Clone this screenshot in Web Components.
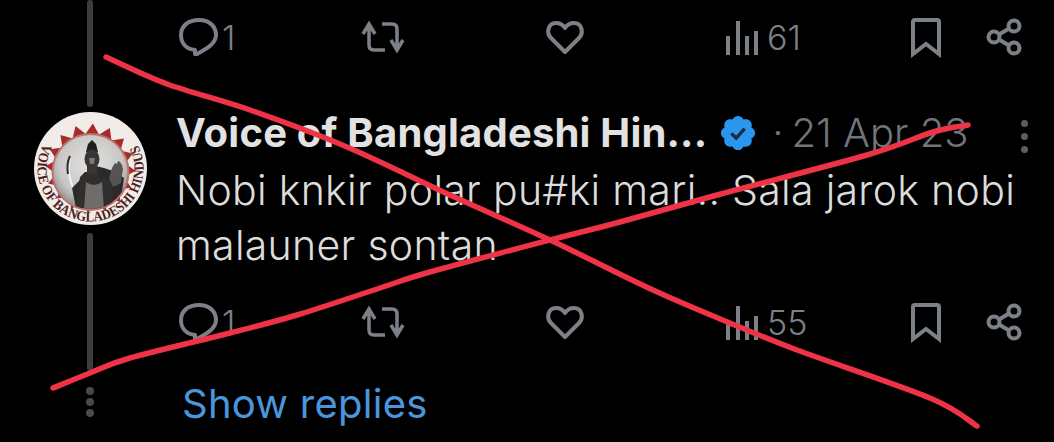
<!DOCTYPE html>
<html>
<head>
<meta charset="utf-8">
<style>
  html, body { margin: 0; background: #000; }
</style>
</head>
<body>
<thread-view>
  <thread-row>
    <rail-line slot="rail" style="height:107px"></rail-line>
    <tweet-actions style="margin-top:16px" replies="1" views="61"></tweet-actions>
  </thread-row>
  <thread-row>
    <seal-avatar slot="rail"></seal-avatar>
    <rail-line slot="rail" style="height:138px;margin-top:8px"></rail-line>
    <tweet-head name="Voice of Bangladeshi Hin..." date="21 Apr 23"></tweet-head>
    <tweet-text>Nobi knkir polar pu#ki mari.. Sala jarok nobi malauner sontan</tweet-text>
    <tweet-actions style="margin-top:28px" replies="1" views="55"></tweet-actions>
  </thread-row>
  <thread-row>
    <rail-dots slot="rail"></rail-dots>
    <show-replies>Show replies</show-replies>
  </thread-row>
  <red-cross></red-cross>
</thread-view>

<script>
  const FONT = '"Inter", "Liberation Sans", sans-serif';

  class ThreadView extends HTMLElement {
    constructor() {
      super();
      this.attachShadow({ mode: "open" });
      this.shadowRoot.innerHTML = `
        <style>
          :host {
            display: block;
            position: relative;
            width: 1054px;
            height: 442px;
            overflow: hidden;
            background: #000;
          }
        </style>
        <slot></slot>
      `;
    }
  }

  class ThreadRow extends HTMLElement {
    constructor() {
      super();
      this.attachShadow({ mode: "open" });
      this.shadowRoot.innerHTML = `
        <style>
          :host { display: grid; grid-template-columns: 176px 1fr; }
          .rail { display: flex; flex-direction: column; align-items: center; padding-left: 4px; }
          .body { display: flex; flex-direction: column; min-width: 0; }
        </style>
        <div class="rail"><slot name="rail"></slot></div>
        <div class="body"><slot></slot></div>
      `;
    }
  }

  class RailLine extends HTMLElement {
    constructor() {
      super();
      this.attachShadow({ mode: "open" });
      this.shadowRoot.innerHTML = `
        <style>
          :host { display: block; width: 6px; border-radius: 3px; background: #3b3c40; margin-bottom: 5px; }
        </style>
      `;
    }
  }

  class RailDots extends HTMLElement {
    constructor() {
      super();
      this.attachShadow({ mode: "open" });
      this.shadowRoot.innerHTML = `
        <style>
          :host { display: flex; flex-direction: column; gap: 3px; padding-top: 11px; }
          i { display: block; width: 8px; height: 8px; border-radius: 50%; background: #48494d; }
        </style>
        <i></i><i></i><i></i>
      `;
    }
  }

  class SealAvatar extends HTMLElement {
    constructor() {
      super();
      this.attachShadow({ mode: "open" });
      let rays = "";
      for (let i = 0; i < 16; i++) {
        rays += `<polygon points="-7,-34 7,-34 0,-45" transform="rotate(${i * 22.5 + 3})"/>`;
      }
      this.shadowRoot.innerHTML = `
        <style>
          :host { display: block; width: 113px; height: 113px; }
          svg { display: block; }
          text { font: bold 14px "Liberation Serif", serif; fill: #4d2220; }
        </style>
        <svg width="113" height="113" viewBox="0 0 113 113">
          <defs>
            <path id="ring" d="M9.7 31.6A53 53 0 1 0 103.3 31.6"/>
            <radialGradient id="photo" cx="50%" cy="40%" r="62%">
              <stop offset="0" stop-color="#e4e3e1"/>
              <stop offset=".7" stop-color="#c9c7c5"/>
              <stop offset="1" stop-color="#8a8886"/>
            </radialGradient>
            <clipPath id="photoclip"><circle cx="56.5" cy="60" r="37"/></clipPath>
          </defs>
          <circle cx="56.5" cy="56.5" r="56.5" fill="#f2ece8"/>
          <g transform="translate(56.5 56.5)" fill="#a62b2b">${rays}</g>
          <circle cx="56.5" cy="60" r="39" fill="#b9736c"/>
          <circle cx="56.5" cy="60" r="37" fill="url(#photo)"/>
          <g clip-path="url(#photoclip)">
            <path d="M36 46C32 60 38 78 50 96" fill="none" stroke="#f5f3f1" stroke-width="2"/>
            <path d="M36 44C33 50 33 56 34 62" fill="none" stroke="#2a2a2a" stroke-width="2"/>
            <path d="M48 66l-10 10 4 20h50l-4-16 2-14-8-6-12-4-8-2z" fill="#2a2a2a"/>
            <path d="M51 60h14l1 6 11 3 3 14-4 14H42l2-18 2-14z" fill="#302f2e"/>
            <path d="M52 70q8 6 16 0l2 28H50z" fill="#6f6d6b"/>
            <path d="M78 56l3-5 2 1 1-3 2 1 2 3 1 4-2 14-8 4-4-9z" fill="#565452"/>
            <path d="M52 40l2-8 4-4 4 4 2 8z" fill="#1f1f1f"/>
            <ellipse cx="58" cy="47" rx="7.5" ry="9.5" fill="#383634"/>
            <path d="M55 46h6l-1 6h-4z" fill="#7c7a78"/>
            <path d="M53 54h10v8h-10z" fill="#383634"/>
          </g>
          <text><textPath href="#ring" textLength="216" lengthAdjust="spacingAndGlyphs">VOICE OF BANGLADESHI HINDUS</textPath></text>
        </svg>
      `;
    }
  }

  class TweetHead extends HTMLElement {
    constructor() {
      super();
      this.attachShadow({ mode: "open" });
      const name = this.getAttribute("name");
      const date = this.getAttribute("date");
      this.shadowRoot.innerHTML = `
        <style>
          :host {
            display: flex;
            align-items: center;
            height: 41px;
            font-family: ${FONT};
            font-size: 40px;
            white-space: nowrap;
          }
          .name { font-weight: 700; color: #e2e2e2; letter-spacing: 0.2px; }
          svg { display: block; flex: none; margin-left: 11px; }
          .dot { color: #70747c; margin-left: 14px; font-weight: 300; }
          .date { color: #70747c; margin-left: 8px; font-weight: 300; }
          .more { display: flex; flex-direction: column; gap: 6px; margin: 7px 26px 0 auto; }
          .more i { display: block; width: 7px; height: 7px; border-radius: 50%; background: #5b5d62; }
        </style>
        <span class="name">${name}</span>
        <svg width="40" height="40" viewBox="0 0 24 24">
          <path fill="#2b96ee" d="M22.25 12c0-1.43-.88-2.67-2.19-3.34.46-1.39.2-2.9-.81-3.91s-2.52-1.27-3.91-.81c-.66-1.31-1.91-2.19-3.34-2.19s-2.67.88-3.33 2.19c-1.4-.46-2.91-.2-3.92.81s-1.26 2.52-.8 3.91c-1.31.67-2.2 1.91-2.2 3.34s.89 2.67 2.2 3.34c-.46 1.39-.21 2.9.8 3.91s2.52 1.26 3.91.81c.67 1.31 1.91 2.19 3.34 2.19s2.68-.88 3.34-2.19c1.39.45 2.9.2 3.91-.81s1.27-2.52.81-3.91c1.31-.67 2.19-1.91 2.19-3.34z"/>
          <path fill="none" stroke="#1b2a44" stroke-width="2" d="M8 12.2l2.9 2.8 5.1-5.6"/>
        </svg>
        <span class="dot">·</span>
        <span class="date">${date}</span>
        <span class="more"><i></i><i></i><i></i></span>
      `;
    }
  }

  class TweetText extends HTMLElement {
    constructor() {
      super();
      this.attachShadow({ mode: "open" });
      this.shadowRoot.innerHTML = `
        <style>
          :host {
            display: block;
            margin-top: 10px;
            width: 860px;
            font-family: ${FONT};
            font-size: 41px;
            font-weight: 300;
            letter-spacing: 0.3px;
            line-height: 55px;
            color: #dcdcdc;
          }
        </style>
        <slot></slot>
      `;
    }
  }

  const ICONS = {
    reply: `<svg width="42" height="40" viewBox="0 0 42 40" fill="none" stroke="#7c8087" stroke-width="4" stroke-linejoin="round">
      <path d="M17 33C8 32 3 26 3 18 3 9 10 3 21 3 32 3 38 10 38 18 38 26 30 31 19 37L17 37Z"/></svg>`,
    retweet: `<svg width="46" height="34" viewBox="0 0 46 34" fill="none" stroke="#7c8087" stroke-width="3.5">
      <path d="M3 14L9 4 15 14M9 5V25Q9 30 14 30H25"/>
      <path d="M22 4H32Q37 4 37 9V29M31 20L37 30 43 20"/></svg>`,
    heart: `<svg width="40" height="36" viewBox="0 0 40 36" fill="none" stroke="#7c8087" stroke-width="4" stroke-linejoin="round">
      <path d="M20 33L6 19C1 14 3 4 11 4 15 4 18 6 20 9 22 6 25 4 29 4 37 4 39 14 34 19Z"/></svg>`,
    views: `<svg width="34" height="38" viewBox="0 0 34 38" fill="#7c8087">
      <rect x="2" y="18" width="4" height="19"/><rect x="12" y="3" width="4" height="34"/>
      <rect x="21" y="18" width="4" height="19"/><rect x="30" y="13" width="4" height="24"/></svg>`,
    bookmark: `<svg width="36" height="42" viewBox="0 0 36 42" fill="none" stroke="#7c8087" stroke-width="4">
      <path d="M5 6Q5 4 7 4H29Q31 4 31 6V38L18 28 5 38Z"/></svg>`,
    share: `<svg width="40" height="40" viewBox="0 0 40 40" fill="none" stroke="#7c8087" stroke-width="4">
      <circle cx="9" cy="20" r="5.5"/><circle cx="29" cy="9" r="5.5"/><circle cx="29" cy="31" r="5.5"/>
      <path d="M14 17.5L24 11.5M14 22.5L24 28.5"/></svg>`
  };

  class TweetActions extends HTMLElement {
    constructor() {
      super();
      this.attachShadow({ mode: "open" });
      this.shadowRoot.innerHTML = `
        <style>
          :host {
            display: grid;
            grid-template-columns: 182px 185px 179px 184px 77px auto;
            align-items: center;
            height: 40px;
            padding-left: 2px;
            font-family: ${FONT};
            font-size: 34px;
            font-weight: 300;
            color: #7c8087;
          }
          div { display: flex; align-items: center; gap: 2px; }
          .views { gap: 9px; }
          svg { display: block; flex: none; }
        </style>
        <div>${ICONS.reply}<span>${this.getAttribute("replies")}</span></div>
        <div>${ICONS.retweet}</div>
        <div>${ICONS.heart}</div>
        <div class="views">${ICONS.views}<span>${this.getAttribute("views")}</span></div>
        <div>${ICONS.bookmark}</div>
        <div>${ICONS.share}</div>
      `;
    }
  }

  class ShowReplies extends HTMLElement {
    constructor() {
      super();
      this.attachShadow({ mode: "open" });
      this.shadowRoot.innerHTML = `
        <style>
          :host {
            display: block;
            padding: 5px 0 0 6px;
            font-family: ${FONT};
            font-size: 40px;
            font-weight: 400;
            letter-spacing: 0.25px;
            line-height: 46px;
            color: #4a96dc;
          }
        </style>
        <slot></slot>
      `;
    }
  }

  // smooth stroke through hand-read points (Catmull-Rom to bezier)
  function smooth(pts) {
    let d = `M${pts[0][0]} ${pts[0][1]}`;
    for (let i = 0; i < pts.length - 1; i++) {
      const a = pts[i - 1] || pts[i], b = pts[i], c = pts[i + 1], e = pts[i + 2] || c;
      const x1 = b[0] + (c[0] - a[0]) / 6, y1 = b[1] + (c[1] - a[1]) / 6;
      const x2 = c[0] - (e[0] - b[0]) / 6, y2 = c[1] - (e[1] - b[1]) / 6;
      d += `C${x1.toFixed(1)} ${y1.toFixed(1)} ${x2.toFixed(1)} ${y2.toFixed(1)} ${c[0]} ${c[1]}`;
    }
    return d;
  }

  class RedCross extends HTMLElement {
    constructor() {
      super();
      this.attachShadow({ mode: "open" });
      const one = [[106,57],[167,84],[250,110],[347,147],[450,195],[550,240],[653,290],[730,323],[797,350],[930,398],[977,426]];
      const two = [[53,388],[90,373],[130,358],[230,333],[297,315],[380,288],[430,272],[550,240],[620,222],[717,195],[867,155],[933,132],[968,125]];
      this.shadowRoot.innerHTML = `
        <style>
          :host { position: absolute; inset: 0; display: block; pointer-events: none; }
          svg { display: block; }
          path { fill: none; stroke: #ee3347; stroke-width: 5.5; stroke-linecap: round; stroke-linejoin: round; }
        </style>
        <svg width="1054" height="442" viewBox="0 0 1054 442">
          <path d="${smooth(one)}"/>
          <path d="${smooth(two)}"/>
        </svg>
      `;
    }
  }

  customElements.define("thread-view", ThreadView);
  customElements.define("thread-row", ThreadRow);
  customElements.define("rail-line", RailLine);
  customElements.define("rail-dots", RailDots);
  customElements.define("seal-avatar", SealAvatar);
  customElements.define("tweet-head", TweetHead);
  customElements.define("tweet-text", TweetText);
  customElements.define("tweet-actions", TweetActions);
  customElements.define("show-replies", ShowReplies);
  customElements.define("red-cross", RedCross);
</script>
</body>
</html>
